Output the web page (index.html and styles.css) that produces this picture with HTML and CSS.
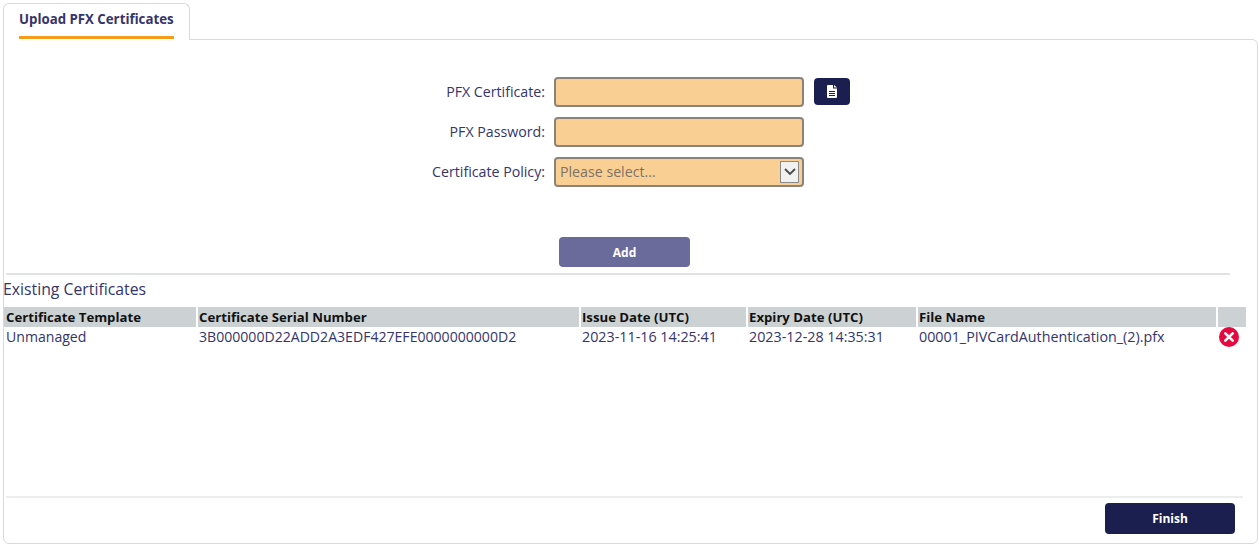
FILE: index.html
```html
<!DOCTYPE html>
<html lang="en">
<head>
<meta charset="utf-8">
<title>Upload PFX Certificates</title>
<link rel="stylesheet" href="styles.css">
</head>
<body>
<div class="tabs">
  <div class="tab"><span class="tab-label">Upload PFX Certificates</span></div>
</div>
<main class="panel">
  <form class="form">
    <label class="form-label">PFX Certificate:</label>
    <div class="field"></div>
    <button type="button" class="file-btn" aria-label="Browse">
      <svg width="10" height="13" viewBox="0 0 10 13"><path fill="#fff" d="M0 1a1 1 0 0 1 1-1h5v3.5h4V12a1 1 0 0 1-1 1H1a1 1 0 0 1-1-1z"/><path fill="#fff" d="M7 0l3 2.6H7z"/><path stroke="#1a1f4f" stroke-width="1" d="M2 6.5h6M2 8.5h6M2 10.5h6"/></svg>
    </button>
    <label class="form-label">PFX Password:</label>
    <div class="field"></div>
    <span></span>
    <label class="form-label">Certificate Policy:</label>
    <div class="field select">
      <span class="placeholder">Please select...</span>
      <span class="arrow"><svg width="12" height="8" viewBox="0 0 12 8"><path d="M1 1l5 5 5-5" fill="none" stroke="#4a4a4a" stroke-width="1.8"/></svg></span>
    </div>
    <span></span>
  </form>
  <div class="add-row"><button type="button" class="btn add">Add</button></div>
  <hr class="rule top-rule">
  <h2 class="section-title">Existing Certificates</h2>
  <table class="grid">
    <colgroup><col class="c1"><col class="c2"><col class="c3"><col class="c4"><col class="c5"><col class="c6"></colgroup>
    <thead>
      <tr><th>Certificate Template</th><th>Certificate Serial Number</th><th>Issue Date (UTC)</th><th>Expiry Date (UTC)</th><th>File Name</th><th></th></tr>
    </thead>
    <tbody>
      <tr>
        <td>Unmanaged</td>
        <td>3B000000D22ADD2A3EDF427EFE0000000000D2</td>
        <td class="wide">2023-11-16 14:25:41</td>
        <td class="wide">2023-12-28 14:35:31</td>
        <td class="wide">00001_PIVCardAuthentication_(2).pfx</td>
        <td class="del"><svg width="20" height="20" viewBox="0 0 20 20"><circle cx="10" cy="10" r="10" fill="#e4093f"/><path d="M6.3 6.3l7.4 7.4M13.7 6.3l-7.4 7.4" stroke="#fff" stroke-width="2.6" stroke-linecap="round"/></svg></td>
      </tr>
    </tbody>
  </table>
  <footer class="footer">
    <button type="button" class="btn finish">Finish</button>
  </footer>
</main>
</body>
</html>
```

FILE: styles.css
```css
html, body { margin: 0; padding: 0; background: #fff; }
body {
  font-family: "Open Sans", "Noto Sans", sans-serif;
  font-size: 14px;
  color: #35346b;
  width: 1259px;
  height: 546px;
  overflow: hidden;
  padding: 3px 1px 0 3px;
  box-sizing: border-box;
}
.tabs { display: flex; height: 37px; margin-bottom: -1px; position: relative; z-index: 1; }
.tab {
  width: 187px;
  box-sizing: border-box;
  height: 37px;
  border: 1px solid #d5dadb;
  border-bottom: 0;
  border-radius: 6px 6px 0 0;
  background: #fff;
  padding: 0 15px;
}
.tab-label {
  display: block;
  height: 35px;
  line-height: 31px;
  box-sizing: border-box;
  border-bottom: 3px solid #f59c1a;
  font-weight: 700;
  font-size: 13.25px;
  color: #35346b;
  white-space: nowrap;
}
.panel {
  box-sizing: border-box;
  height: 505px;
  border: 1px solid #d5dadb;
  border-radius: 0 6px 6px 6px;
  display: flex;
  flex-direction: column;
  background: #fff;
}
.form {
  display: grid;
  grid-template-columns: 541px 250px auto;
  column-gap: 9px;
  row-gap: 10px;
  margin-top: 37px;
  align-items: center;
}
.form-label { text-align: right; white-space: nowrap; font-size: 14.2px; padding-bottom: 2px; }
.field {
  box-sizing: border-box;
  height: 30px;
  background: #f9cf94;
  border: 2px solid #8b8378;
  border-radius: 4px;
  display: flex;
  align-items: center;
  justify-content: space-between;
}
.placeholder { color: #7d7264; padding: 0 0 2px 4px; font-size: 14.2px; }
.arrow {
  box-sizing: border-box;
  width: 19px;
  height: 22px;
  background: #f1f1f1;
  border: 1px solid #8a8a8a;
  display: flex;
  align-items: center;
  justify-content: center;
  margin-right: 3px;
}
.file-btn {
  width: 36px;
  height: 27px;
  margin: 0 0 2px 1px;
  border: 0;
  border-radius: 4px;
  background: #1a1f4f;
  display: flex;
  align-items: center;
  justify-content: center;
  padding: 0;
}
.btn {
  width: 130px;
  border: 0;
  border-radius: 4px;
  color: #fff;
  font-family: inherit;
  font-weight: 700;
  font-size: 12px;
  padding: 0;
}
.add-row { margin-top: 50px; padding-left: 555px; display: flex; }
.add { width: 131px; height: 30px; background: #6b6b9b; }
.rule { border: 0; margin: 0; }
.top-rule { height: 2px; background: #dfe3e3; margin: 6px 27px 0 2px; }
.section-title {
  font-weight: 400;
  font-size: 15.8px;
  line-height: 20px;
  margin: 4px 0 8px -1px;
  color: #35346b;
}
.grid { border-collapse: separate; border-spacing: 2px 0; table-layout: fixed; width: 1244px; margin-left: -2px; }
.c1 { width: 192px; } .c2 { width: 381px; } .c3 { width: 165px; }
.c4 { width: 168px; } .c5 { width: 298px; } .c6 { width: 28px; }
.grid th {
  background: #ccd1d3;
  color: #111;
  text-align: left;
  font-size: 13.2px;
  font-weight: 700;
  box-sizing: border-box;
  height: 20px;
  padding: 1px 1px 0;
  white-space: nowrap;
  line-height: 19px;
}
.grid td {
  font-size: 14.08px;
  height: 20px;
  line-height: 19px;
  vertical-align: top;
  padding: 0 1px;
  white-space: nowrap;
  color: #35346b;
}
.grid td.wide { font-size: 14.3px; }
.grid th:first-child, .grid td:first-child { padding-left: 2px; }
.del svg { display: block; margin-top: 0; }
.footer {
  margin: auto 14px 0 2px;
  border-top: 2px solid #eceeee;
  height: 47px;
  box-sizing: border-box;
  padding: 5px 8px 0 0;
  display: flex;
  justify-content: flex-end;
}
.finish { height: 31px; background: #1a1f4f; }
```
